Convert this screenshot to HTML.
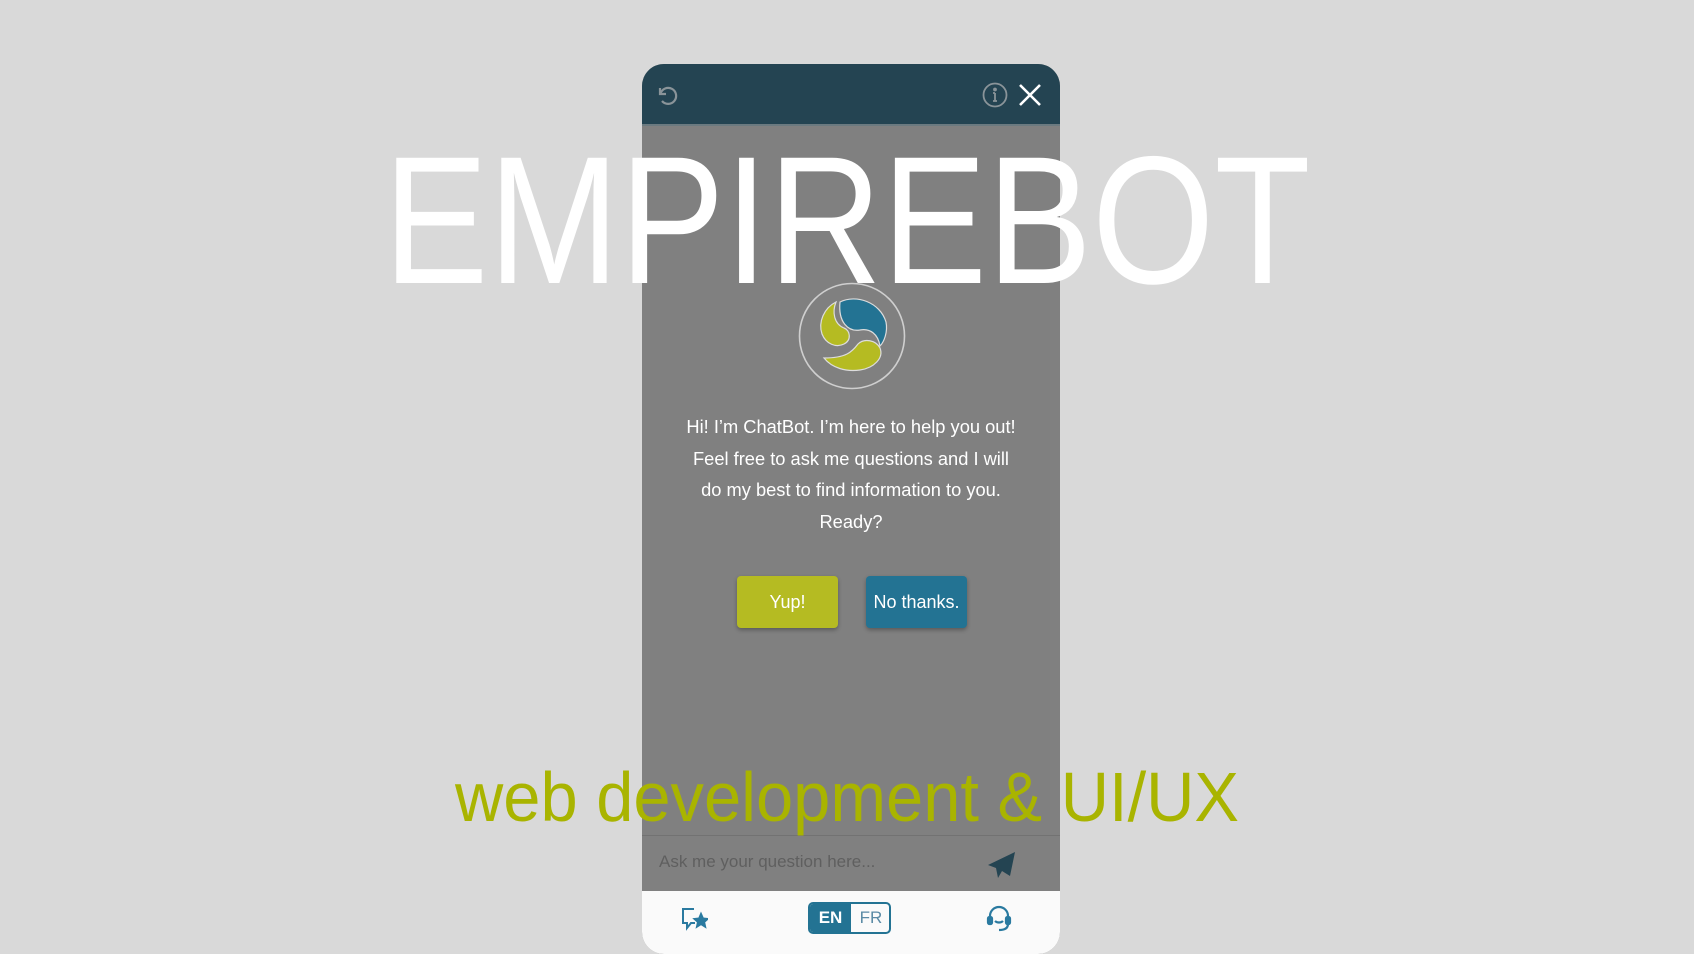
<!DOCTYPE html>
<html><head><meta charset="utf-8"><style>
*{margin:0;padding:0;box-sizing:border-box}
body{width:1694px;height:938px;background:#d9d9d9;position:relative;overflow:hidden;font-family:"Liberation Sans",sans-serif}
.panel{position:absolute;left:642px;top:64px;width:418px;height:890px;background:#808080;border-radius:22px;overflow:hidden}
.hdr{position:absolute;left:0;top:0;width:100%;height:62px;background:#244452;border-bottom:2px solid #6b7a80}
.msg{position:absolute;left:0;width:100%;top:347px;text-align:center;color:#fff;font-size:18.3px;line-height:31.7px}
.btn{position:absolute;top:512px;height:52px;width:101px;border-radius:4px;color:#fff;font-size:18px;line-height:52px;text-align:center;box-shadow:0 2px 4px rgba(0,0,0,.3)}
.input{position:absolute;left:0;top:771px;width:100%;height:56px;border-top:1px solid #727272}
.foot{position:absolute;left:0;top:827px;width:100%;height:63px;background:#fafafa}
.big{position:absolute;left:0;width:1694px;text-align:center;color:#fff;font-size:182px;top:120px;line-height:200px;transform:scaleX(.865)}
.sub{position:absolute;left:0;width:1694px;text-align:center;color:#a9b400;font-size:70px;top:752px;line-height:90px;transform:scaleX(.955)}
</style></head><body>
<div class="panel">
 <div class="hdr">
  <svg style="position:absolute;left:13px;top:19px" width="24" height="24" viewBox="0 0 24 24" fill="none" stroke="#8a9499" stroke-width="2.2"><path d="M5 5v6h6"/><path d="M5.5 10.5A8 8 0 1 1 7 18"/></svg>
  <svg style="position:absolute;left:340px;top:18px" width="26" height="26" viewBox="0 0 26 26" fill="none" stroke="#8a9499" stroke-width="1.8"><circle cx="13" cy="13" r="11.5"/><path d="M13 11v8M11 19h4M11 11h2"/><circle cx="13" cy="7.5" r="1" fill="#8a9499"/></svg>
  <svg style="position:absolute;left:375px;top:18px" width="26" height="26" viewBox="0 0 26 26" stroke="#fff" stroke-width="2.6"><path d="M3 3l20 20M23 3L3 23"/></svg>
 </div>
 <svg style="position:absolute;left:156px;top:218px" width="108" height="108" viewBox="0 0 108 108">
  <circle cx="54" cy="54" r="52.5" fill="none" stroke="#cfcfcf" stroke-width="1.6"/>
  <path d="M38 20 C26 26 20 40 24 52 C28 62 38 66 46 62 C54 58 52 48 46 46 C36 42 34 30 38 20Z" fill="#b5bb22" stroke="#ddd" stroke-width="1.2"/>
  <path d="M42 20 C58 12 82 20 88 40 C90 50 86 60 82 64 C80 52 72 46 62 48 C50 50 40 40 42 20Z" fill="#237393" stroke="#ddd" stroke-width="1.2"/>
  <path d="M26 76 C34 86 48 90 62 88 C76 86 86 76 82 66 C78 58 66 56 60 62 C54 70 48 76 26 76Z" fill="#b5bb22" stroke="#ddd" stroke-width="1.2"/>
 </svg>
 <div class="msg">Hi! I’m ChatBot. I’m here to help you out!<br>Feel free to ask me questions and I will<br>do my best to find information to you.<br>Ready?</div>
 <div class="btn" style="left:95px;background:#b5bb22">Yup!</div>
 <div class="btn" style="left:224px;background:#237393">No thanks.</div>
 <div class="input">
  <div style="position:absolute;left:17px;top:16px;color:#5f5f5f;font-size:17px">Ask me your question here...</div>
  <svg style="position:absolute;left:345px;top:15px" width="30" height="28" viewBox="0 0 30 28"><path d="M28 1L1 14l8 3 2 10 4-7 8 5z" fill="#244452"/></svg>
 </div>
 <div class="foot">
  <svg style="position:absolute;left:38px;top:14px" width="28" height="26" viewBox="0 0 28 26" fill="none" stroke="#2a7aa0" stroke-width="2"><path d="M14 4H3v14h4v5l4-5h4"/><path d="M21 9l2 4.5 4.5.5-3.4 3 1 4.6L21 19l-4 2.6 1-4.6-3.4-3 4.5-.5z" fill="#2a7aa0"/></svg>
  <div style="position:absolute;left:166px;top:11px;width:83px;height:32px;border:2px solid #237393;border-radius:5px;overflow:hidden;font-size:17px;font-weight:bold;line-height:28px">
   <div style="position:absolute;left:0;top:0;width:41px;height:100%;background:#237393;color:#fff;text-align:center">EN</div>
   <div style="position:absolute;left:41px;top:0;width:40px;height:100%;color:#5a8aa5;text-align:center;font-weight:normal">FR</div>
  </div>
  <svg style="position:absolute;left:343px;top:12px" width="28" height="30" viewBox="0 0 28 30" fill="none" stroke="#2a7aa0" stroke-width="2.2"><path d="M5 16v-3a9 9 0 0 1 18 0v3"/><rect x="3" y="14" width="4" height="7" rx="1.5" fill="#2a7aa0"/><rect x="21" y="14" width="4" height="7" rx="1.5" fill="#2a7aa0"/><path d="M23 21c0 4-3 6-9 6"/><path d="M10 18c2 2 6 2 8 0"/></svg>
 </div>
</div>
<div class="big">EMPIREBOT</div>
<div class="sub">web development &amp; UI/UX</div>
</body></html>
